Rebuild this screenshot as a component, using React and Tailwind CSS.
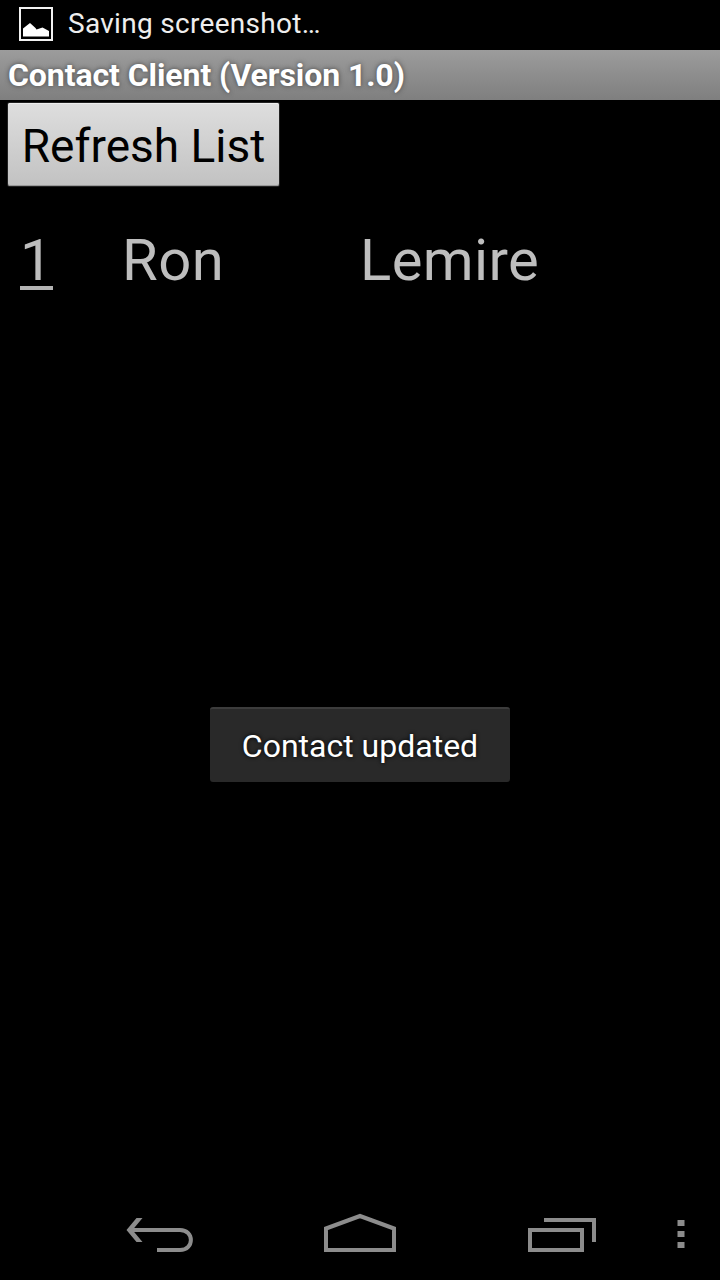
function StatusBar() {
  return (
    <header className="flex h-[50px] items-start pl-[18px]">
      <svg className="mt-[6px] h-9 w-9" viewBox="0 0 36 36">
        <rect x="2" y="2" width="32" height="32" fill="none" stroke="#f2f2f2" strokeWidth="2" />
        <path d="M5 30.500V22.500l7-5.500 5.500 5 1 1.500 6-2 6.500 3.500v5.500z" fill="#fff" />
      </svg>
      <span className="ml-[14px] text-[28px] leading-[47px] tracking-[0.3px] text-[#eeeeee]">Saving screenshot…</span>
    </header>
  );
}

function TitleBar() {
  return (
    <div className="flex h-[50px] items-center bg-gradient-to-b from-[#9c9c9c] to-[#7f7f7f] pl-2">
      <h1 className="text-[32px] leading-[50px] font-bold tracking-[-0.08px] text-white [text-shadow:0_0_5px_#444]">
        Contact Client (Version 1.0)
      </h1>
    </div>
  );
}

function NavigationBar() {
  return (
    <nav className="flex h-24 items-center pt-[6px] text-[#8c8c8c]">
      <button className="ml-[110px]" aria-label="Back">
        <svg className="h-[70px] w-[100px]" viewBox="0 0 100 70" fill="none" stroke="currentColor" strokeWidth="4">
          <path d="M20 30h50c14.500 0 14.500 20 0 20H47" />
          <path d="M26.500 18h6L22.500 30l10 12h-6L16.500 30z" fill="currentColor" stroke="none" />
        </svg>
      </button>
      <button className="ml-[100px]" aria-label="Home">
        <svg className="h-[70px] w-[100px]" viewBox="0 0 100 70" fill="none" stroke="currentColor" strokeWidth="4">
          <path d="M16 50V28.500L50 16l34 12.500V50z" />
        </svg>
      </button>
      <button className="ml-[105px]" aria-label="Recent apps">
        <svg className="h-[70px] w-[90px]" viewBox="0 0 90 70" fill="none" stroke="currentColor" strokeWidth="4">
          <path d="M29 20h50v22M15 30h52v20H15z" />
        </svg>
      </button>
      <button className="ml-[72px]" aria-label="Menu">
        <svg className="h-[70px] w-[8px]" viewBox="0 0 8 70" fill="currentColor">
          <path d="M.5 20h7v6h-7zM.5 31h7v6h-7zM.5 42h7v6h-7z" />
        </svg>
      </button>
    </nav>
  );
}

export default function App() {
  return (
    <div className="relative flex h-[1280px] w-[720px] flex-col overflow-hidden bg-black font-[Roboto,sans-serif]">
      <StatusBar />
      <TitleBar />
      <main className="flex flex-1 flex-col items-start pt-[3px]">
        <button className="ml-2 h-[83px] w-[271px] rounded-[2px] bg-gradient-to-b from-[#dedede] to-[#c2c2c2] pt-[3px] text-[46px] leading-[80px] whitespace-nowrap text-black shadow-[inset_0_1px_0_#eee,inset_0_-1px_0_#999,0_0_0_1px_#222]">
          Refresh List
        </button>
        <div className="mt-[34px] flex h-20 text-[58px] leading-[80px] text-[#bebebe]">
          <div className="ml-5 w-[102px]">
            <span className="inline-block h-[70px] border-b-4 border-[#b4b4b4]">1</span>
          </div>
          <span className="w-[238px] tracking-[0.5px]">Ron</span>
          <span className="tracking-[0.4px]">Lemire</span>
        </div>
      </main>
      <NavigationBar />
      <div className="absolute top-[707px] left-[210px] flex h-[75px] w-[300px] items-center justify-center rounded-[3px] border-t-2 border-[#3c3c3c] bg-[#292929] text-[32px] whitespace-nowrap text-white [text-shadow:0_0_4px_#000]">
        Contact updated
      </div>
    </div>
  );
}
